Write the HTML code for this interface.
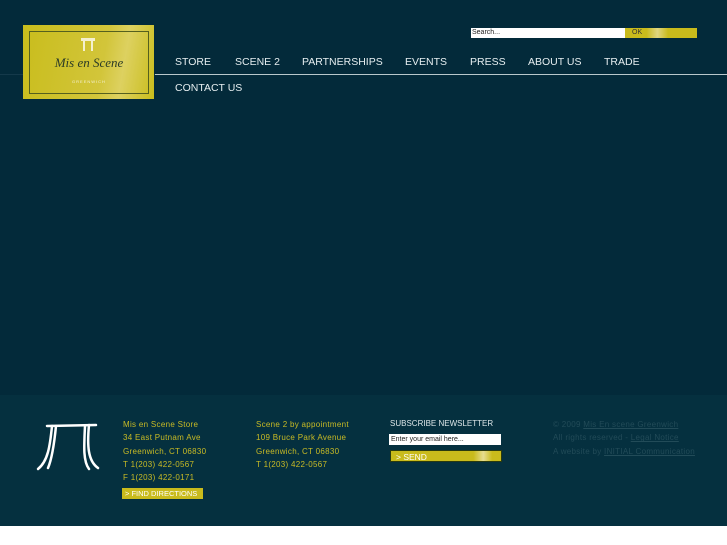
<!DOCTYPE html>
<html><head><style>
body{margin:0;width:727px;height:545px;background:#fff;position:relative;overflow:hidden;font-family:"Liberation Sans",sans-serif}
.main{position:absolute;left:0;top:0;width:727px;height:395px;background:#032a3a}
.foot{position:absolute;left:0;top:395px;width:727px;height:131px;background:#05303f}
.a{position:absolute}
.nav{position:absolute;top:56px;color:#e6eef0;font-size:10.5px;letter-spacing:0}
.line{position:absolute;left:155px;top:74px;width:572px;height:1px;background:#b9c8cc}
.y{color:#c9bb25;font-size:8px;position:absolute;line-height:13.3px;letter-spacing:.3px}
</style></head><body>
<div class="main"></div>
<div class="a" style="left:0;top:74px;width:155px;height:1px;background:#14394a"></div>
<div class="line"></div>
<div class="a" style="left:23px;top:25px;width:131px;height:74px;background:linear-gradient(100deg,#c9bd1c 0%,#d2c53a 60%,#ddd160 75%,#c9bd1c 100%)"></div>
<div class="a" style="left:29px;top:31px;width:118px;height:61px;border:1px solid #55601e"></div>
<div class="a" style="left:81px;top:38px;width:14px;height:3px;background:#f4f0d0"></div>
<div class="a" style="left:83px;top:40px;width:2px;height:11px;background:#f4f0d0"></div>
<div class="a" style="left:91px;top:40px;width:2px;height:11px;background:#f4f0d0"></div>
<div class="a" style="left:42px;top:55px;width:94px;text-align:center;font-family:'Liberation Serif',serif;font-style:italic;font-size:13px;color:#2c3c27">Mis en Scene</div>
<div class="a" style="left:42px;top:79px;width:94px;text-align:center;font-size:4px;letter-spacing:1px;color:#f4f0d0">GREENWICH</div>
<div class="nav" style="left:175px">STORE</div>
<div class="nav" style="left:235px">SCENE 2</div>
<div class="nav" style="left:302px">PARTNERSHIPS</div>
<div class="nav" style="left:405px">EVENTS</div>
<div class="nav" style="left:470px">PRESS</div>
<div class="nav" style="left:528px">ABOUT US</div>
<div class="nav" style="left:604px">TRADE</div>
<div class="nav" style="left:175px;top:82px">CONTACT US</div>
<div class="a" style="left:471px;top:28px;width:154px;height:10px;background:#fff;font-size:7px;line-height:10px;color:#222;padding-left:1px;box-sizing:border-box">Search...</div>
<div class="a" style="left:625px;top:28px;width:72px;height:10px;background:linear-gradient(90deg,#c9bb1c 30%,#e0d680 45%,#c9bb1c 60%);font-size:7px;line-height:10px;color:#333;padding-left:7px;box-sizing:border-box">OK</div>
<div class="foot"></div>
<svg class="a" style="left:34px;top:416px" width="70" height="62"><g stroke="#fff" stroke-width="2.5" fill="none" stroke-linecap="round"><path d="M13 10 L62 9"/><path d="M18 10 C16 30 14 45 4 53"/><path d="M22 10 C20 30 17 45 14 52"/><path d="M55 9 C53 30 54 45 64 52"/><path d="M51 10 C50 30 49 45 55 53"/></g></svg>
<div class="y" style="left:123px;top:418px">Mis en Scene Store<br>34 East Putnam Ave<br>Greenwich, CT 06830<br>T 1(203) 422-0567<br>F 1(203) 422-0171</div>
<div class="a" style="left:122px;top:488px;width:81px;height:11px;background:#c9bb1c;color:#fff;font-size:7.5px;line-height:11px;padding-left:3px;box-sizing:border-box">&gt; FIND DIRECTIONS</div>
<div class="y" style="left:256px;top:418px">Scene 2 by appointment<br>109 Bruce Park Avenue<br>Greenwich, CT 06830<br>T 1(203) 422-0567</div>
<div class="a" style="left:390px;top:419px;color:#dde6e8;font-size:8px">SUBSCRIBE NEWSLETTER</div>
<div class="a" style="left:389px;top:434px;width:112px;height:11px;background:#fff;font-size:7px;line-height:11px;color:#222;padding-left:2px;box-sizing:border-box">Enter your email here...</div>
<div class="a" style="left:390px;top:450px;width:112px;height:12px;background:linear-gradient(90deg,#c9bb1c 75%,#e6dc90 84%,#c9bb1c 92%);color:#fff;font-size:8.5px;line-height:12px;padding-left:5px;box-sizing:border-box;border:1px solid #2a3a10">&gt; SEND</div>
<div class="y" style="left:553px;top:418px;color:#224b58">© 2009 <u>Mis En scene Greenwich</u><br>All rights reserved - <u>Legal Notice</u><br>A website by <u>INITIAL Communication</u></div>
</body></html>
